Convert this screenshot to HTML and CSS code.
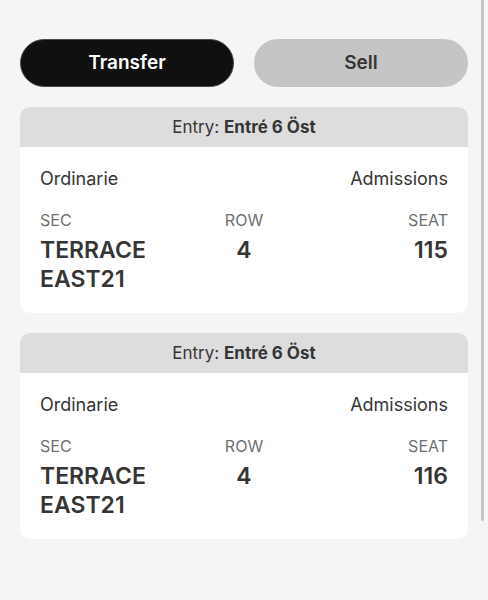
FILE: index.html
```html
<!DOCTYPE html>
<html lang="en">
<head>
    <meta charset="UTF-8">
    <meta name="viewport" content="width=device-width, initial-scale=1.0">
    <title>My Tickets</title>
    <link rel="stylesheet" href="styles.css">
</head>
<body>
    <main class="tickets">
        <div class="actions">
            <button type="button" class="btn btn-transfer">Transfer</button>
            <button type="button" class="btn btn-sell">Sell</button>
        </div>

        <section class="card">
            <p class="entry">Entry: <strong>Entré 6 Öst</strong></p>
            <div class="card-body">
                <div class="ticket-type">
                    <span>Ordinarie</span>
                    <span>Admissions</span>
                </div>
                <dl class="seat-info">
                    <div class="info">
                        <dt>SEC</dt>
                        <dd>TERRACE EAST21</dd>
                    </div>
                    <div class="info">
                        <dt>ROW</dt>
                        <dd>4</dd>
                    </div>
                    <div class="info">
                        <dt>SEAT</dt>
                        <dd>115</dd>
                    </div>
                </dl>
            </div>
        </section>

        <section class="card">
            <p class="entry">Entry: <strong>Entré 6 Öst</strong></p>
            <div class="card-body">
                <div class="ticket-type">
                    <span>Ordinarie</span>
                    <span>Admissions</span>
                </div>
                <dl class="seat-info">
                    <div class="info">
                        <dt>SEC</dt>
                        <dd>TERRACE EAST21</dd>
                    </div>
                    <div class="info">
                        <dt>ROW</dt>
                        <dd>4</dd>
                    </div>
                    <div class="info">
                        <dt>SEAT</dt>
                        <dd>116</dd>
                    </div>
                </dl>
            </div>
        </section>
    </main>

    <div class="scroll-thumb"></div>
</body>
</html>
```

FILE: styles.css
```css
* {
    margin: 0;
    padding: 0;
    box-sizing: border-box;
}

body {
    position: relative;
    min-height: 100vh;
    background: #f5f5f5;
    color: #353535;
    font-family: 'Inter', 'Liberation Sans', sans-serif;
    font-size: 18px;
    line-height: 24px;
}

.tickets {
    display: flex;
    flex-direction: column;
    gap: 20px;
    padding: 39px 20px;
}

.actions {
    display: grid;
    grid-template-columns: 1fr 1fr;
    gap: 20px;
}

.btn {
    padding: 11px;
    border: 1px solid transparent;
    border-radius: 24px;
    font-family: inherit;
    font-size: 19px;
    font-weight: 600;
    line-height: 24px;
    cursor: pointer;
}

.btn-transfer {
    background: #101010;
    border-color: #4a4a4a;
    color: #fff;
}

.btn-sell {
    background: #c5c5c5;
    color: #353535;
}

.card {
    background: #fff;
    border-radius: 10px;
    overflow: hidden;
}

.entry {
    padding: 8px 20px;
    background: #ddd;
    font-size: 17px;
    text-align: center;
}

.card-body {
    padding: 20px 20px 19px;
}

.ticket-type {
    display: flex;
    justify-content: space-between;
    margin-bottom: 18px;
}

.seat-info {
    display: grid;
    grid-template-columns: repeat(3, 1fr);
}

.info:nth-child(2) {
    text-align: center;
}

.info:last-child {
    text-align: right;
}

dt {
    margin-bottom: 5px;
    color: #6f6f6f;
    font-size: 16px;
    line-height: 22px;
}

dd {
    font-size: 23px;
    font-weight: 600;
    line-height: 29px;
}

/* overlay scroll indicator */
.scroll-thumb {
    position: absolute;
    top: 0;
    right: 4px;
    width: 3px;
    height: 521px;
    border-radius: 0 0 2px 2px;
    background: #c6c6c6;
}
```
